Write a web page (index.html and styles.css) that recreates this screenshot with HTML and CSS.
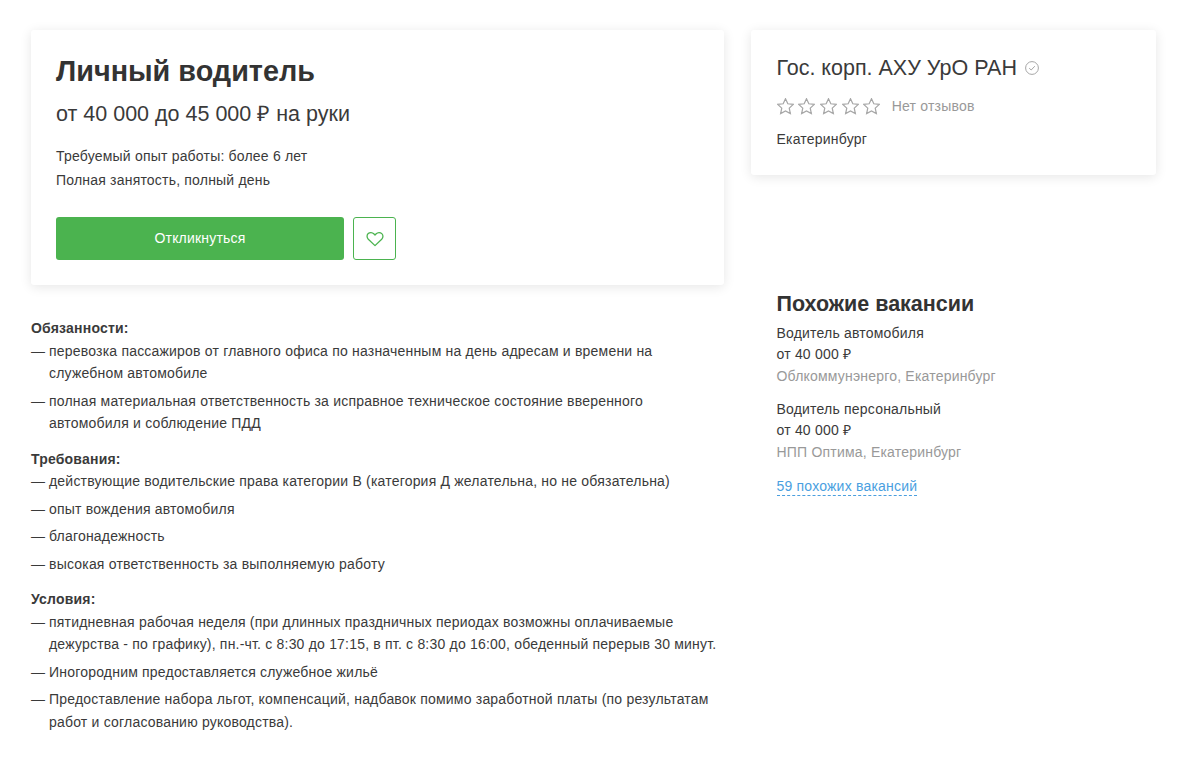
FILE: index.html
```html
<!DOCTYPE html>
<html lang="ru">
<head>
<meta charset="utf-8">
<title>Личный водитель</title>
<link rel="stylesheet" href="styles.css">
</head>
<body>
<div class="page">
  <main class="main">
    <section class="card vacancy">
      <h1 class="title">Личный водитель</h1>
      <p class="salary">от 40 000 до 45 000 ₽ на руки</p>
      <p class="meta">Требуемый опыт работы: более 6 лет</p>
      <p class="meta">Полная занятость, полный день</p>
      <div class="actions">
        <a class="btn-apply">Откликнуться</a>
        <a class="btn-fav">
          <svg width="18" height="16" viewBox="0 0 18 16" fill="none" stroke="#4bb34f" stroke-width="1.3" stroke-linejoin="round"><path d="M9 14.6 2.3 8.2C.6 6.5.7 4 2.2 2.6 3.8 1.1 6.3 1.2 7.8 2.8L9 4.1l1.2-1.3c1.5-1.6 4-1.7 5.6-.2 1.5 1.4 1.6 3.9-.1 5.6L9 14.6Z"/></svg>
        </a>
      </div>
    </section>
    <div class="description">
      <h3 class="desc-head">Обязанности:</h3>
      <ul class="desc-list">
        <li>перевозка пассажиров от главного офиса по назначенным на день адресам и времени на служебном автомобиле</li>
        <li>полная материальная ответственность за исправное техническое состояние вверенного автомобиля и соблюдение ПДД</li>
      </ul>
      <h3 class="desc-head">Требования:</h3>
      <ul class="desc-list">
        <li>действующие водительские права категории В (категория Д желательна, но не обязательна)</li>
        <li>опыт вождения автомобиля</li>
        <li>благонадежность</li>
        <li>высокая ответственность за выполняемую работу</li>
      </ul>
      <h3 class="desc-head">Условия:</h3>
      <ul class="desc-list">
        <li>пятидневная рабочая неделя (при длинных праздничных периодах возможны оплачиваемые дежурства - по графику), пн.-чт. с 8:30 до 17:15, в пт. с 8:30 до 16:00, обеденный перерыв 30 минут.</li>
        <li>Иногородним предоставляется служебное жильё</li>
        <li>Предоставление набора льгот, компенсаций, надбавок помимо заработной платы (по результатам работ и согласованию руководства).</li>
      </ul>
    </div>
  </main>
  <aside class="side">
    <section class="card company">
      <div class="company-name">
        <span>Гос. корп. АХУ УрО РАН</span>
        <svg width="14" height="14" viewBox="0 0 14 14" fill="none" stroke="#a6a6a6"><circle cx="7" cy="7" r="6.4"/><path d="M4.2 7.2 6.2 9l3.6-3.8"/></svg>
      </div>
      <div class="rating">
        <div class="stars">
          <svg class="star" viewBox="0.6 0.6 16.800 16.800"><path d="M9 1.300l2.300 5 5.400.6-4 3.700 1.100 5.400L9 13.300 4.200 16l1.100-5.400-4-3.700 5.400-.6z"/></svg>
          <svg class="star" viewBox="0.6 0.6 16.800 16.800"><path d="M9 1.300l2.300 5 5.400.6-4 3.700 1.100 5.400L9 13.300 4.200 16l1.100-5.400-4-3.700 5.400-.6z"/></svg>
          <svg class="star" viewBox="0.6 0.6 16.800 16.800"><path d="M9 1.300l2.300 5 5.400.6-4 3.700 1.100 5.400L9 13.300 4.200 16l1.100-5.400-4-3.700 5.400-.6z"/></svg>
          <svg class="star" viewBox="0.6 0.6 16.800 16.800"><path d="M9 1.300l2.300 5 5.400.6-4 3.700 1.100 5.400L9 13.300 4.200 16l1.100-5.400-4-3.700 5.400-.6z"/></svg>
          <svg class="star" viewBox="0.6 0.6 16.800 16.800"><path d="M9 1.300l2.300 5 5.400.6-4 3.700 1.100 5.400L9 13.300 4.200 16l1.100-5.400-4-3.700 5.400-.6z"/></svg>
        </div>
        <span class="no-reviews">Нет отзывов</span>
      </div>
      <p class="city">Екатеринбург</p>
    </section>
    <section class="similar">
      <h2 class="similar-title">Похожие вакансии</h2>
      <div class="job">
        <p>Водитель автомобиля</p>
        <p>от 40 000 ₽</p>
        <p class="muted">Облкоммунэнерго, Екатеринбург</p>
      </div>
      <div class="job">
        <p>Водитель персональный</p>
        <p>от 40 000 ₽</p>
        <p class="muted">НПП Оптима, Екатеринбург</p>
      </div>
      <a class="more">59 похожих вакансий</a>
    </section>
  </aside>
</div>
</body>
</html>
```
FILE: styles.css
```css
* { box-sizing: border-box; }
html, body { margin: 0; padding: 0; background: #fff; }
body {
  font-family: "Liberation Sans", Arial, sans-serif;
  font-size: 14px;
  letter-spacing: 0.2px;
  color: #3a3a3a;
}
p, h1, h2, h3, ul { margin: 0; padding: 0; }
.page {
  display: grid;
  grid-template-columns: 693px 405px;
  column-gap: 27px;
  padding: 30px 0 0 31px;
}
.card {
  background: #fff;
  border-radius: 3px;
  box-shadow: 0 2px 12px rgba(0, 0, 0, 0.1);
}
.vacancy { height: 255px; padding: 22px 25px 0; }
.title { font-size: 28.8px; line-height: 38px; font-weight: 700; letter-spacing: 0; color: #333; }
.salary { font-size: 21.5px; line-height: 28px; margin-top: 10px; margin-bottom: 16px; letter-spacing: 0; }
.meta { line-height: 24px; }
.actions { display: flex; gap: 9px; margin-top: 25px; }
.btn-apply {
  width: 288px; height: 43px;
  display: flex; align-items: center; justify-content: center;
  background: #4bb34f; color: #fff; border-radius: 3px;
  padding-bottom: 2px;
}
.btn-fav {
  width: 43px; height: 43px;
  display: flex; align-items: center; justify-content: center;
  border: 1px solid #4bb34f; border-radius: 3px;
}
.description { margin-top: 32.3px; padding-right: 6px; line-height: 22.5px; }
.desc-head { font-size: 14px; font-weight: 700; }
.desc-list { list-style: none; margin-bottom: 13px; }
.desc-list li { position: relative; padding-left: 18px; margin-bottom: 5px; }
.desc-list li::before { content: "—"; position: absolute; left: 0; top: 0; letter-spacing: 0; }
.company { height: 145px; padding: 24px 25.5px 0; }
.company-name { display: flex; align-items: center; gap: 8px; font-size: 21.5px; line-height: 28px; letter-spacing: 0; }
.rating { display: flex; align-items: center; gap: 11.5px; margin-top: 13px; height: 22px; }
.stars { display: flex; gap: 4.7px; }
.star { width: 17px; height: 17px; fill: none; stroke: #a6a6a6; stroke-width: 1.2; }
.no-reviews { color: #999; }
.city { margin-top: 11px; line-height: 22px; }
.similar { padding: 115px 25.5px 0; }
.similar-title { font-size: 21.5px; line-height: 28px; font-weight: 700; letter-spacing: 0; color: #333; }
.job { line-height: 21.5px; margin-top: 4.6px; }
.job + .job { margin-top: 11.8px; }
.muted { color: #999; }
.more {
  display: inline-block; margin-top: 13.5px;
  color: #4a9fdf; line-height: 18px;
  border-bottom: 1px dashed #4a9fdf;
}
```
